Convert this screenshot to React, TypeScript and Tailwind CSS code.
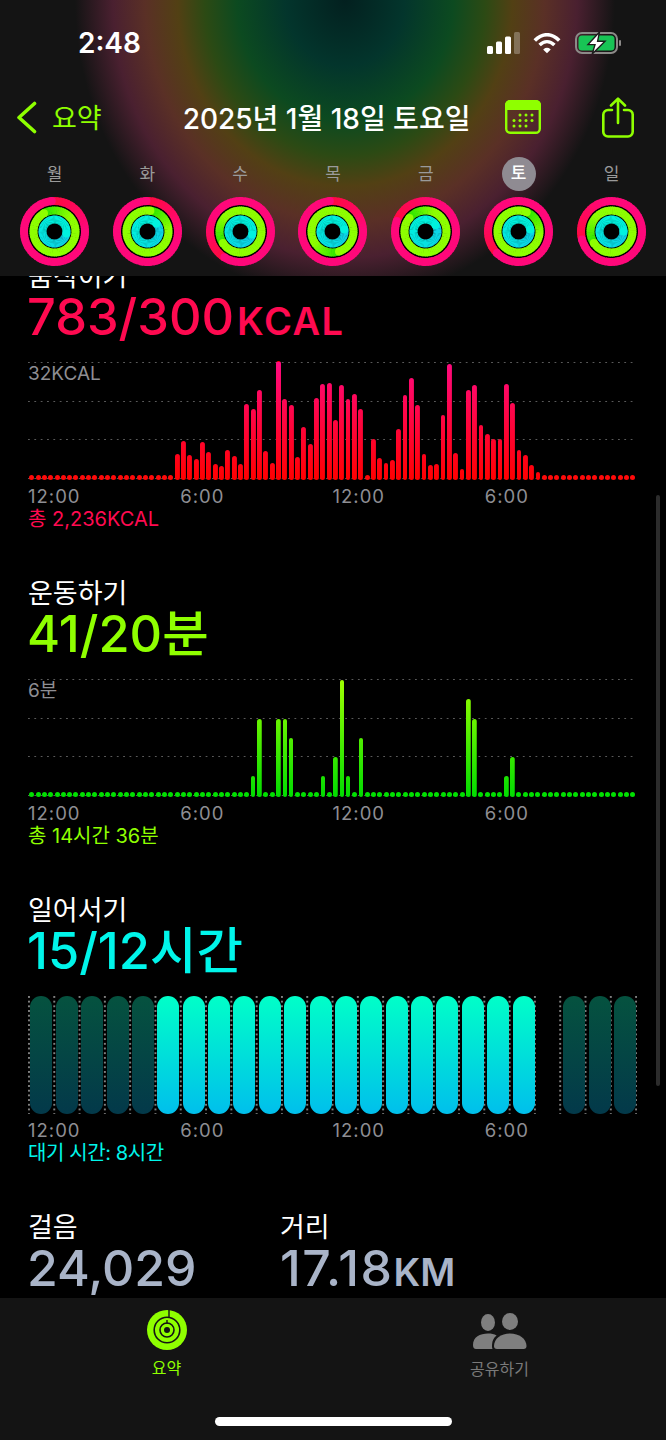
const SANS = "font-['Inter','Noto_Sans_CJK_KR',sans-serif]";

const move = [
  ...Array(23).fill(0),
  24, 37, 23, 19, 36, 26, 14, 12, 28, 22, 14, 74, 69, 88, 27, 15, 117, 79, 73, 21, 51, 34, 80, 94, 95, 58,
  93, 79, 84, 69, 0, 39, 20, 15, 18, 49, 83, 100, 73, 24, 13, 14, 63, 114, 25, 9, 88, 93, 53, 44, 39, 39, 94, 75, 28, 23, 13, 6,
  ...Array(15).fill(0),
];

const exerciseMap: Record<number, number> = {
  35: 19, 36: 76, 39: 76, 40: 76, 41: 57, 46: 19, 48: 38, 49: 115, 50: 19, 52: 57, 69: 96, 70: 76, 75: 19, 76: 38,
};
const exercise = Array.from({ length: 96 }, (_, i) => exerciseMap[i] ?? 0);

const stand = Array.from({ length: 24 }, (_, i) => {
  if (i === 20) return "none";
  if (i < 5 || i > 20) return "dim";
  return "on";
});

function mix(a: number[], b: number[], t: number) {
  return `rgb(${a.map((v, i) => Math.round(v + (b[i] - v) * t)).join(",")})`;
}

function Ring({ r, w, head, from, to, span }: { r: number; w: number; head: number; from: number[]; to: number[]; span: number }) {
  const n = 72;
  const pt = (deg: number) => {
    const a = ((deg - 90) * Math.PI) / 180;
    return [r * Math.cos(a), r * Math.sin(a)];
  };
  const segs = Array.from({ length: n }, (_, i) => {
    const a0 = head + (i * 360) / n;
    const a1 = head + ((i + 1.3) * 360) / n;
    const [x0, y0] = pt(a0);
    const [x1, y1] = pt(a1);
    return (
      <path
        key={i}
        d={`M${x0} ${y0}A${r} ${r} 0 0 1 ${x1} ${y1}`}
        fill="none"
        stroke={mix(from, to, Math.min(1, i / (n * span)))}
        strokeWidth={w}
      />
    );
  });
  const [hx, hy] = pt(head);
  return (
    <g>
      {segs}
      <circle cx={hx} cy={hy} r={w / 2} fill={mix(from, to, 1)} />
    </g>
  );
}

const RED = [255, 10, 64];
const PINK = [255, 8, 122];
const GREEN = [40, 228, 0];
const LIME = [142, 255, 0];
const BLUE = [14, 208, 232];
const CYAN = [0, 242, 222];

function Rings({ a, b, c }: { a: number; b: number; c: number }) {
  return (
    <svg width="69" height="69" viewBox="-34.5 -34.5 69 69" className="block shrink-0">
      <circle r="27" fill="#000" />
      <Ring r={30.5} w={8} head={a} from={RED} to={PINK} span={0.25} />
      <Ring r={21} w={8} head={b} from={GREEN} to={LIME} span={0.2} />
      <Ring r={12} w={8} head={c} from={BLUE} to={CYAN} span={0.7} />
    </svg>
  );
}

const days = [
  { d: "월", a: 355, b: 330, c: 100 },
  { d: "화", a: 358, b: 8, c: 48 },
  { d: "수", a: 212, b: 237, c: 105 },
  { d: "목", a: 355, b: 162, c: 80 },
  { d: "금", a: 290, b: 310, c: 57 },
  { d: "토", a: 225, b: 23, c: 80 },
  { d: "일", a: 255, b: 237, c: 90 },
];

function GridLine() {
  return <div className="h-px w-full bg-[linear-gradient(to_right,#5a5a5a_1.4px,transparent_1.4px)] bg-[length:6.35px_1px]" />;
}

function Labels() {
  return (
    <div className="mt-[5px] grid h-[22px] grid-cols-4 text-[18.5px] leading-[22px] tracking-[1px] text-[#8e8e93]">
      <span>12:00</span>
      <span>6:00</span>
      <span>12:00</span>
      <span>6:00</span>
    </div>
  );
}

function BarChart({
  data,
  label,
  barClass,
  dotClass,
}: {
  data: number[];
  label: string;
  barClass: string;
  dotClass: string;
}) {
  return (
    <div className="relative mt-[19px] h-[118px]">
      <div className="absolute inset-0 flex flex-col justify-between pb-[1px]">
        <GridLine />
        <GridLine />
        <GridLine />
        <GridLine />
      </div>
      <span className="absolute left-0 top-[2px] text-[19px] leading-[20px] text-[#8e8e93]">{label}</span>
      <div className="absolute inset-0 flex items-end justify-between px-[1.2px]">
        {data.map((h, i) => (
          <div key={i} className="flex w-[5px] justify-center">
            {h > 0 ? (
              <div className={barClass} style={{ height: h + 2 }} />
            ) : (
              <div className={dotClass} />
            )}
          </div>
        ))}
      </div>
    </div>
  );
}

function StandChart() {
  return (
    <div className="mt-[19px] grid h-[118px] grid-cols-24 bg-[radial-gradient(circle_at_1px_1px,#808080_0.8px,transparent_1.1px)] bg-[length:25.3px_4.7px]">
      {stand.map((s, i) => (
        <div key={i} className="flex justify-center pl-[1.5px]">
          {s === "on" && (
            <div className="h-full w-[22px] rounded-[11px] bg-[linear-gradient(to_bottom,#00ffc8,#00bfec)]" />
          )}
          {s === "dim" && (
            <div className="h-full w-[22px] rounded-[11px] bg-[linear-gradient(to_bottom,#05523f,#03394a)]" />
          )}
        </div>
      ))}
    </div>
  );
}

function Section({
  title,
  value,
  unit,
  color,
  children,
  note,
  noteColor,
}: {
  title: string;
  value: string;
  unit?: string;
  color: string;
  children: React.ReactNode;
  note: string;
  noteColor: string;
}) {
  return (
    <section className="h-[272px]">
      <div className="h-8 pt-[2px] text-[27px] leading-8 text-white">{title}</div>
      <div className={`-ml-[1px] h-[52px] whitespace-nowrap text-[50.5px] font-medium leading-[52px] ${color}`}>
        {value}
        {unit && <span className="ml-[3px] text-[38px] font-semibold tracking-[1.5px]">{unit}</span>}
      </div>
      {children}
      <Labels />
      <div className={`h-6 text-[20px] leading-6 ${noteColor}`}>{note}</div>
    </section>
  );
}

export default function App() {
  return (
    <div className={`relative flex h-[1440px] w-[666px] flex-col overflow-hidden bg-black ${SANS}`}>
      <header className="z-10 flex h-[276px] shrink-0 flex-col bg-[#141414] bg-[radial-gradient(ellipse_270px_300px_at_345px_0px,#03201f_0%,#03352c_22%,#0c4a20_40%,#2c4a14_52%,#524014_62%,#5a3026_74%,#4a2030_86%,#141414_100%)]">
        <div className="flex h-[86px] items-center pl-[78px] pr-[45px]">
          <span className="text-[28px] font-semibold text-white">2:48</span>
          <div className="ml-auto flex items-center">
            <svg width="33" height="22" viewBox="0 0 33 22" fill="#fff">
              <rect x="0" y="14" width="6" height="8" rx="1.5" />
              <rect x="9" y="9.5" width="6" height="12.5" rx="1.5" />
              <rect x="18" y="4.5" width="6" height="17.5" rx="1.5" />
              <rect x="27" y="0" width="6" height="22" rx="1.5" fill="#fff" fillOpacity="0.28" />
            </svg>
            <svg className="ml-[13px]" width="28" height="21" viewBox="0 0 28 21" fill="none" stroke="#fff" strokeWidth="3.6">
              <path d="M1.8 7.4C9.4 -0.2 18.6 -0.2 26.2 7.4" />
              <path d="M6.6 12C11.2 7.6 16.8 7.6 21.4 12" />
              <path d="M11.4 16.6 14 19.2 16.6 16.6C15.2 15.2 12.8 15.2 11.4 16.6Z" fill="#fff" strokeWidth="1.6" />
            </svg>
            <svg className="ml-[14px]" width="46" height="22" viewBox="0 0 46 22" fill="none">
              <rect x="1" y="1" width="41" height="20" rx="6" stroke="#8c8a88" strokeWidth="2" />
              <rect x="3.5" y="3.5" width="36" height="15" rx="3.5" fill="#18c455" />
              <rect x="44" y="8" width="2" height="6" rx="1" fill="#8c8a88" />
              <path d="M24.5 0 13 12.6h7L17.2 22 30 9.2h-7.4Z" fill="#fff" stroke="#1c1c1c" strokeWidth="1.4" />
            </svg>
          </div>
        </div>
        <div className="flex h-[62px] items-center pl-[16px]">
          <svg width="22" height="33" viewBox="0 0 22 33" fill="none" stroke="#8fff00" strokeWidth="3.6" strokeLinecap="round" strokeLinejoin="round">
            <path d="M18.5 2.5 3 16.5 18.5 30.5" />
          </svg>
          <span className="ml-[14px] mt-[3px] text-[27px] leading-8 text-[#8fff00]">요약</span>
          <span className="ml-[81px] mt-[3px] whitespace-nowrap text-[28px] font-medium leading-8 text-white">2025년 1월 18일 토요일</span>
          <svg className="ml-[35px]" width="36" height="34" viewBox="0 0 36 34">
            <rect x="1.2" y="1.2" width="33.6" height="31.6" rx="4" fill="none" stroke="#8fff00" strokeWidth="2.4" />
            <path d="M5 0h26a5 5 0 0 1 5 5v5H0V5a5 5 0 0 1 5-5Z" fill="#8fff00" />
            <g fill="#8fff00">
              <circle cx="15" cy="15" r="1.5" />
              <circle cx="21" cy="15" r="1.5" />
              <circle cx="27" cy="15" r="1.5" />
              <circle cx="9" cy="20.5" r="1.5" />
              <circle cx="15" cy="20.5" r="1.5" />
              <circle cx="21" cy="20.5" r="1.5" />
              <circle cx="27" cy="20.5" r="1.5" />
              <circle cx="9" cy="26" r="1.5" />
              <circle cx="15" cy="26" r="1.5" />
              <circle cx="21" cy="26" r="1.5" />
            </g>
          </svg>
          <svg className="ml-[61px]" width="32" height="41" viewBox="0 0 32 41" fill="none" stroke="#8fff00" strokeWidth="2.6" strokeLinecap="round" strokeLinejoin="round">
            <path d="M10 13H6a4.7 4.7 0 0 0-4.7 4.7v17A4.7 4.7 0 0 0 6 39.5h20a4.7 4.7 0 0 0 4.7-4.7v-17A4.7 4.7 0 0 0 26 13h-4" />
            <path d="M16 26V2M9 8.5 16 1.6 23 8.5" />
          </svg>
        </div>
        <div className="mt-[9px] flex h-[34px] justify-between px-[20px]">
          {days.map((d) => (
            <div key={d.d} className="flex w-[69px] justify-center">
              {d.d === "토" ? (
                <span className="flex h-[34px] w-[34px] items-center justify-center rounded-full bg-[#8f8b92] text-[17px] font-medium text-white">
                  {d.d}
                </span>
              ) : (
                <span className="text-[17px] leading-[34px] text-[#9a9a9a]">{d.d}</span>
              )}
            </div>
          ))}
        </div>
        <div className="mt-[6px] flex justify-between px-[20px]">
          {days.map((d) => (
            <Rings key={d.d} a={d.a} b={d.b} c={d.c} />
          ))}
        </div>
      </header>

      <main className="min-h-0 flex-1 overflow-hidden">
        <div className="-mt-[17px] flex flex-col gap-[45px] pl-[28px] pr-[29px]">
          <Section
            title="움직이기"
            value="783/300"
            unit="KCAL"
            color="text-[#ff0a50]"
            note="총 2,236KCAL"
            noteColor="text-[#ff0a50]"
          >
            <BarChart
              data={move}
              label="32KCAL"
              barClass="w-[4.8px] shrink-0 rounded-full bg-[linear-gradient(to_top,#ff0000,#ff0a80)] bg-[length:100%_118px] bg-bottom"
              dotClass="h-[5px] w-[5px] shrink-0 rounded-full bg-[#ff0a0a]"
            />
          </Section>
          <Section
            title="운동하기"
            value="41/20분"
            color="text-[#8fff00]"
            note="총 14시간 36분"
            noteColor="text-[#8fff00]"
          >
            <BarChart
              data={exercise}
              label="6분"
              barClass="w-[4.5px] shrink-0 rounded-full bg-[linear-gradient(to_top,#00dc00,#a0ff00)] bg-[length:100%_118px] bg-bottom"
              dotClass="h-[5px] w-[5px] shrink-0 rounded-full bg-[#00e000]"
            />
          </Section>
          <Section
            title="일어서기"
            value="15/12시간"
            color="text-[#00f5ea]"
            note="대기 시간: 8시간"
            noteColor="text-[#00f5ea] tracking-[-0.4px]"
          >
            <StandChart />
          </Section>
          <div className="flex">
            <div className="w-[252px]">
              <div className="h-8 pt-[2px] text-[27px] leading-8 text-white">걸음</div>
              <div className="-ml-[1px] h-[52px] text-[50px] font-medium leading-[52px] text-[#a9b4c8]">24,029</div>
            </div>
            <div>
              <div className="h-8 pt-[2px] text-[27px] leading-8 text-white">거리</div>
              <div className="h-[52px] whitespace-nowrap text-[50px] font-medium leading-[52px] text-[#a9b4c8]">
                <span className="tracking-[1.5px]">17.18</span>
                <span className="text-[38px] font-semibold">KM</span>
              </div>
            </div>
          </div>
        </div>
      </main>

      <div className="absolute right-[6px] top-[495px] h-[591px] w-[4px] rounded-full bg-[#2c2c2c]" />

      <nav className="relative z-10 h-[142px] shrink-0 bg-[#141414]">
        <div className="flex h-[92px]">
          <div className="flex w-[333px] flex-col items-center pt-[12px]">
            <svg width="40" height="40" viewBox="0 0 40 40" fill="none" className="block">
              <circle cx="20" cy="20" r="20" fill="#8fff00" />
              <circle cx="20" cy="20" r="12.8" stroke="#141414" strokeWidth="1.6" />
              <circle cx="20" cy="20" r="7" stroke="#141414" strokeWidth="1.6" />
              <circle cx="20" cy="20" r="3" fill="#141414" />
              <path d="M22 0v7.4M20 14v-4" stroke="#141414" strokeWidth="1.4" />
            </svg>
            <span className="mt-[6px] text-[16px] leading-6 text-[#8fff00]">요약</span>
          </div>
          <div className="flex w-[333px] flex-col items-center pt-[15px]">
            <svg width="54" height="36" viewBox="0 0 54 36" fill="#7f7f7f" className="block">
              <ellipse cx="15" cy="9.5" rx="7" ry="8.5" />
              <ellipse cx="37" cy="8.5" rx="8" ry="8.5" />
              <path d="M0 32C0 24 7 20.5 15 20.5c3.4 0 6.2.6 8.6 1.9C20.4 25 19 28 19 33.5c0 .9.2 1.7.5 2.5H3c-2 0-3-1.500-3-4Z" />
              <path d="M21 33c0-7.500 7-12.600 16-12.600S53.500 25.500 53.500 33c0 2-1 3-3 3H24c-2 0-3-1-3-3Z" />
            </svg>
            <span className="mt-[8px] text-[16px] leading-6 text-[#7a7a7a]">공유하기</span>
          </div>
        </div>
        <div className="mx-auto mt-[27px] h-[9px] w-[237px] rounded-full bg-white" />
      </nav>
    </div>
  );
}
